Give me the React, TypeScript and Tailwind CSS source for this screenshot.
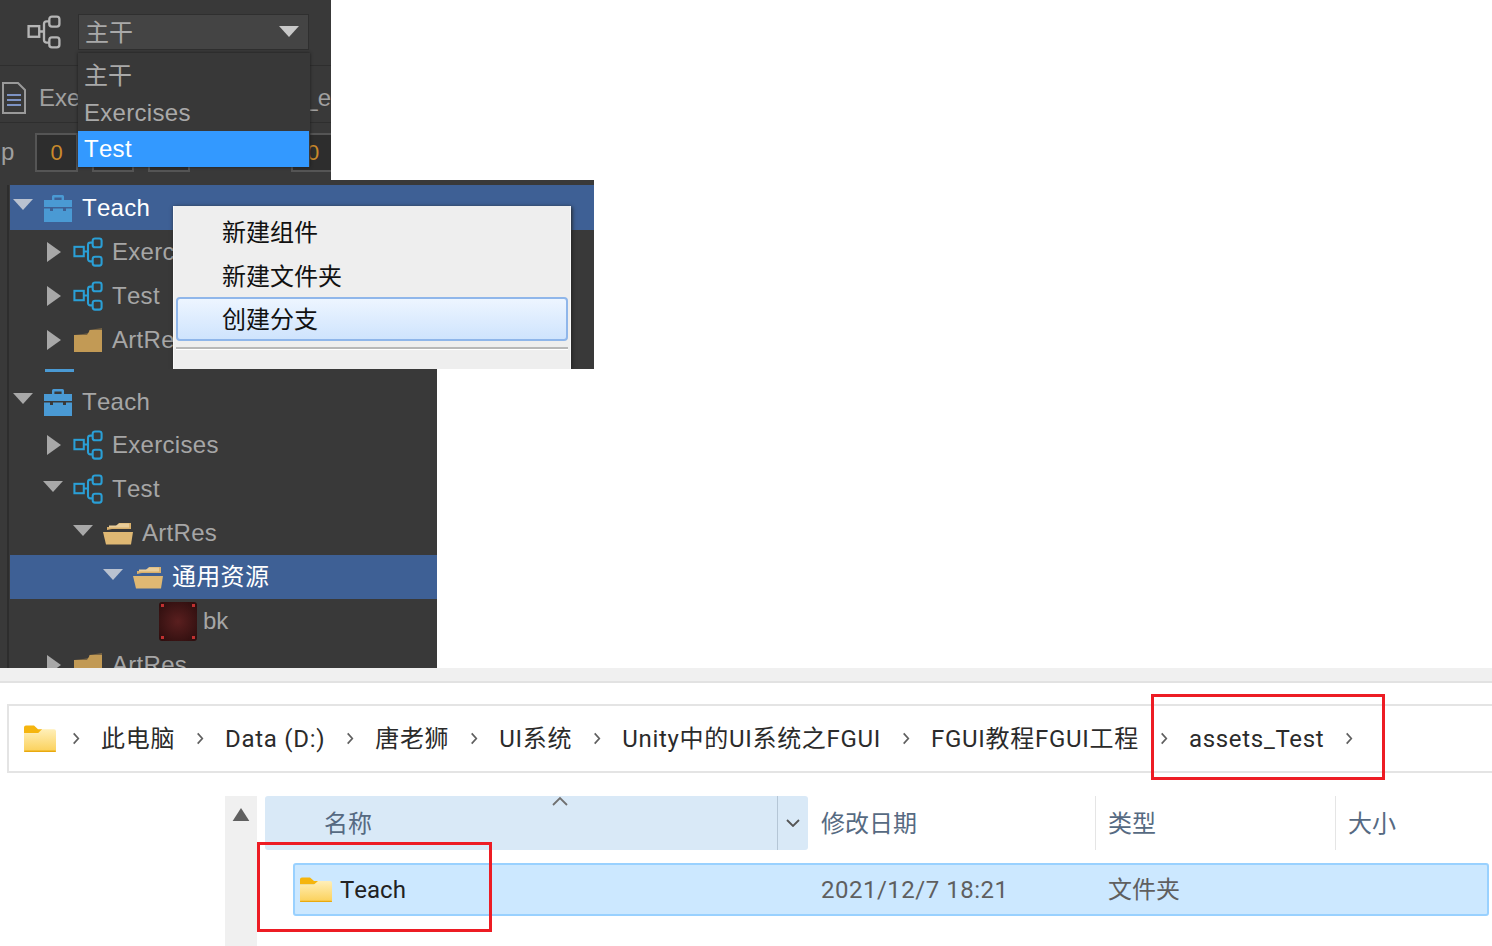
import React from 'react';

const font = "font-['Roboto','Noto_Sans_CJK_SC',sans-serif]";
const fguiFont = "font-['Liberation_Sans','Noto_Sans_CJK_SC',sans-serif] [font-kerning:none]";

function BranchIcon({ color = '#2a9fd6', className = 'w-[32px] h-[32px]' }: { color?: string; className?: string }) {
    return (
        <svg viewBox="0 0 32 32" fill="none" stroke={color} strokeWidth="2.2" className={className}>
            <rect x="1.5" y="10.5" width="10" height="10" />
            <rect x="21" y="1.5" width="9.5" height="9.5" rx="2.5" />
            <rect x="21" y="21" width="9.5" height="9.5" rx="2.5" />
            <path d="M11.5 15.5H16M21 6h-2.5a2.5 2.5 0 0 0-2.5 2.5v15a2.5 2.5 0 0 0 2.5 2.5H21" />
        </svg>
    );
}

function ToolboxIcon() {
    return (
        <svg viewBox="0 0 30 30" className="w-[30px] h-[30px]">
            <path d="M9 7V3.5A1.5 1.5 0 0 1 10.5 2h9A1.5 1.5 0 0 1 21 3.5V7h-2.4V4.4h-7.2V7z" fill="#4a9ad4" />
            <path d="M1 7h28v7H1z" fill="#4a9ad4" />
            <path d="M1 15.5h6V18h3v-2.5h10V18h3v-2.5h6V29H1z" fill="#4a9ad4" />
        </svg>
    );
}

function FolderClosed() {
    return (
        <svg viewBox="0 0 30 26" className="w-[30px] h-[26px]">
            <path d="M1 8l9-1 6-1V3l13-2v24H1z" fill="#c0965077" />
            <path d="M1 8h13l3-5h12v22H1z" fill="#c29a55" />
        </svg>
    );
}

function FolderOpen() {
    return (
        <svg viewBox="0 0 30 24" className="w-[30px] h-[24px]">
            <path d="M4 9V6h9l3-4h12v6H9z" fill="#d9b06c" />
            <path d="M0 11h30l-2 12.5H3z" fill="#dfb873" />
            <path d="M6 4.5h7l3-2h10v4H6z" fill="#e9cd9a" />
        </svg>
    );
}

function Arrow({ open, color = '#a8a8a8' }: { open: boolean; color?: string }) {
    return open ? (
        <svg viewBox="0 0 20 12" className="w-[20px] h-[12px] -mt-[5px]">
            <path d="M0 0h20L10 11z" fill={color} />
        </svg>
    ) : (
        <svg viewBox="0 0 14 20" className="w-[14px] h-[20px] ml-[4px]">
            <path d="M0 0l14 10L0 20z" fill={color} />
        </svg>
    );
}

type RowProps = {
    indent: string;
    height?: string;
    open?: boolean;
    icon: React.ReactNode;
    label: string;
    selected?: boolean;
};

function TreeRow({ indent, height = 'h-[44px]', open, icon, label, selected }: RowProps) {
    return (
        <div className={`flex shrink-0 items-center ${height} ${indent} ${selected ? 'bg-[#3e6095] text-white' : 'text-[#a6a6a6]'}`}>
            <div className="flex w-[20px] shrink-0 items-center justify-start">
                {open === undefined ? null : <Arrow open={open} color={selected ? '#b9c2d0' : '#a8a8a8'} />}
            </div>
            <div className="ml-[10px] flex w-[30px] shrink-0 items-center justify-center">{icon}</div>
            <span className="ml-[9px] whitespace-nowrap text-[24px] leading-none tracking-[0.3px]">{label}</span>
        </div>
    );
}

function NumBox({ className, empty }: { className: string; empty?: boolean }) {
    return (
        <div className={`flex h-[39px] shrink-0 items-center justify-center border-2 border-[#555555] bg-[#2d2d2d] text-[22px] text-[#c98a2b] ${className}`}>
            {empty ? '' : '0'}
        </div>
    );
}

function Toolbar() {
    return (
        <div className="relative flex h-[180px] w-[331px] flex-col overflow-hidden bg-[#393939]">
            <div className="flex h-[66px] shrink-0 items-center border-b border-[#2e2e2e] pb-[2px] pl-[27px]">
                <BranchIcon color="#b5b5b5" className="h-[34px] w-[34px]" />
                <div className="ml-[17px] flex h-[36px] w-[231px] items-center justify-between border border-[#2f2f2f] bg-[#444444] pl-[6px] pr-[9px] text-[24px] text-[#a9a9a9]">
                    <span className="pt-[3px]">主干</span>
                    <svg viewBox="0 0 20 12" className="h-[12px] w-[20px]">
                        <path d="M0 0h20L10 11z" fill="#c8c8c8" />
                    </svg>
                </div>
            </div>
            <div className="flex h-[57px] shrink-0 items-center justify-between border-b border-[#2e2e2e] pl-[2px] pt-[7px] text-[24px] text-[#a0a0a0]">
                <div className="flex items-center">
                    <svg viewBox="0 0 24 32" fill="none" className="h-[32px] w-[24px]">
                        <path d="M1 1h15l7 7v23H1z" stroke="#9a9a9a" strokeWidth="2" />
                        <path d="M5 13h14M5 18h14M5 23h14" stroke="#7d93c4" strokeWidth="2" />
                    </svg>
                    <span className="ml-[13px]">Exe</span>
                </div>
                <span>_e</span>
            </div>
            <div className="flex h-[57px] shrink-0 items-center pb-[1px] pt-[2px] text-[24px] text-[#a0a0a0]">
                <span className="w-[35px] shrink-0 pl-[1px]">p</span>
                <NumBox className="w-[43px]" />
                <NumBox className="ml-[14px] w-[42px]" empty />
                <NumBox className="ml-[14px] w-[42px]" empty />
                <NumBox className="ml-[101px] w-[44px]" />
            </div>

            {/* branch dropdown */}
            <div className="absolute left-[78px] top-[53px] flex h-[114px] w-[232px] flex-col bg-[#383838] text-[24px] leading-none text-[#a9a9a9] shadow-[0_0_3px_#1c1c1c]">
                <div className="flex h-[41px] items-center pl-[6px] pt-[4px]">主干</div>
                <div className="flex h-[37px] items-center pl-[6px] tracking-[0.3px]">Exercises</div>
                <div className="flex h-[36px] w-[231px] items-center bg-[#3399ff] pl-[6px] tracking-[0.3px] text-white">Test</div>
            </div>
        </div>
    );
}

function ContextMenu() {
    return (
        <div className={`absolute left-[173px] top-[26px] h-[163px] w-[398px] border-l border-r border-[#f8f8f8] bg-[#eeeeee] px-[2px] pt-[4px] text-[24px] leading-none text-[#111111] shadow-[1px_1px_4px_#222222] ${font}`}>
            <div className="flex h-[44px] items-center pl-[46px] pt-[2px]">新建组件</div>
            <div className="flex h-[43px] items-center pl-[46px] pt-[2px]">新建文件夹</div>
            <div className="flex h-[44px] items-center rounded-[4px] border-2 border-[#8fb6ea] bg-gradient-to-b from-[#edf5ff] to-[#cfe4fd] pl-[44px] pt-[2px]">创建分支</div>
            <div className="mt-[6px] border-t-2 border-b border-t-[#b8b8b8] border-b-white" />
        </div>
    );
}

function TreeTop() {
    return (
        <div className={`relative h-[189px] w-[594px] overflow-hidden bg-[#393939] pt-[5px] ${fguiFont}`}>
            <div className="ml-[7px] h-full border-l-2 border-[#2d2d2d] pl-px">
                <TreeRow indent="pl-[3px]" height="h-[45px]" open icon={<ToolboxIcon />} label="Teach" selected />
                <TreeRow indent="pl-[33px]" open={false} icon={<BranchIcon />} label="Exercises" />
                <TreeRow indent="pl-[33px]" open={false} icon={<BranchIcon />} label="Test" />
                <TreeRow indent="pl-[33px]" open={false} icon={<FolderClosed />} label="ArtRes" />
            </div>
            <ContextMenu />
        </div>
    );
}

function TreeBottom() {
    return (
        <div className={`h-[299px] w-[437px] overflow-hidden bg-[#393939] ${fguiFont}`}>
            <div className="ml-[7px] h-full border-l-2 border-[#2d2d2d] pl-px">
                <div className="ml-[35px] h-[3px] w-[29px] bg-[#4a9ad4]" />
                <div className="h-[8px]" />
                <TreeRow indent="pl-[3px]" height="h-[43px]" open icon={<ToolboxIcon />} label="Teach" />
                <TreeRow indent="pl-[33px]" open={false} icon={<BranchIcon />} label="Exercises" />
                <TreeRow indent="pl-[33px]" open icon={<BranchIcon />} label="Test" />
                <TreeRow indent="pl-[63px]" open icon={<FolderOpen />} label="ArtRes" />
                <TreeRow indent="pl-[93px]" open icon={<FolderOpen />} label="通用资源" selected />
                <div className="flex h-[44px] items-center pl-[149px] text-[#a6a6a6]">
                    <div className="relative h-[39px] w-[38px] rounded-[3px] bg-[radial-gradient(circle,#5a1f1f,#2a0d0d)]">
                        <span className="absolute left-[2px] top-[2px] h-[3px] w-[3px] bg-[#c03030]" />
                        <span className="absolute right-[2px] top-[2px] h-[3px] w-[3px] bg-[#c03030]" />
                        <span className="absolute bottom-[2px] left-[2px] h-[3px] w-[3px] bg-[#c03030]" />
                        <span className="absolute bottom-[2px] right-[2px] h-[3px] w-[3px] bg-[#c03030]" />
                    </div>
                    <span className="ml-[6px] text-[24px] leading-none">bk</span>
                </div>
                <TreeRow indent="pl-[33px]" open={false} icon={<FolderClosed />} label="ArtRes" />
            </div>
        </div>
    );
}

function WinFolder({ id, className }: { id: string; className: string }) {
    return (
        <svg viewBox="0 0 32 28" preserveAspectRatio="none" className={className}>
            <defs>
                <linearGradient id={id} x1="0" y1="0" x2="0" y2="1">
                    <stop offset="0" stopColor="#ffefb8" />
                    <stop offset="1" stopColor="#fbd058" />
                </linearGradient>
            </defs>
            <path d="M0 2.5A2 2 0 0 1 2 .5h8l4 4h4v4H0z" fill="#f5b50e" />
            <path d="M0 8.5L14 8.5l4-4h12a2 2 0 0 1 2 2V26.5a1.5 1.5 0 0 1-1.5 1.5h-29A1.5 1.5 0 0 1 0 26.5z" fill={`url(#${id})`} />
            <rect x="0" y="26.5" width="32" height="1.5" rx="0.7" fill="#e9a90f" />
        </svg>
    );
}

function Crumb() {
    return (
        <svg viewBox="0 0 8 14" fill="none" stroke="#5f5f5f" strokeWidth="1.8" className="h-[13px] w-[8px] shrink-0">
            <path d="M1.5 1.5L6.5 7l-5 5.5" />
        </svg>
    );
}

const crumbs = ['此电脑', 'Data (D:)', '唐老狮', 'UI系统', 'Unity中的UI系统之FGUI', 'FGUI教程FGUI工程', 'assets_Test'];

function AddressBar() {
    return (
        <div className="ml-[7px] mt-[21px] flex h-[69px] items-center border-y-2 border-l-2 border-[#e4e4e4] pl-[15px] text-[24px] leading-none tracking-[0.7px] text-[#2b2b2b]">
            <WinFolder id="barFolder" className="h-[27px] w-[32px]" />
            <div className="ml-[16px] flex items-center gap-[21px]">
                <Crumb />
                {crumbs.map((c) => (
                    <React.Fragment key={c}>
                        <span className="whitespace-nowrap">{c}</span>
                        <Crumb />
                    </React.Fragment>
                ))}
            </div>
        </div>
    );
}

function FileList() {
    return (
        <div className="mt-[23px] flex flex-1 pl-[225px]">
            <div className="flex w-[32px] shrink-0 justify-center bg-[#f0f0f0] pt-[12px]">
                <svg viewBox="0 0 18 14" className="h-[13px] w-[18px]">
                    <path d="M9 0l9 14H0z" fill="#606060" />
                </svg>
            </div>
            <div className="ml-[8px] flex-1">
                <div className="flex h-[54px] text-[24px] leading-none text-[#566a82]">
                    <div className="relative flex w-[543px] rounded-[3px] bg-[#d9e9f7]">
                        <span className="ml-[59px] self-center pt-[2px]">名称</span>
                        <svg viewBox="0 0 18 10" fill="none" stroke="#707070" strokeWidth="1.8" className="absolute left-[286px] top-[0px] h-[10px] w-[18px]">
                            <path d="M2 9l7-7 7 7" />
                        </svg>
                        <div className="ml-auto flex w-[31px] items-center justify-center border-l border-[#b5c6d6]">
                            <svg viewBox="0 0 14 8" fill="none" stroke="#555555" strokeWidth="1.8" className="h-[8px] w-[14px]">
                                <path d="M1 1l6 6 6-6" />
                            </svg>
                        </div>
                    </div>
                    <div className="flex w-[288px] items-center border-r border-[#e5e5e5] pl-[13px] pt-[2px]">修改日期</div>
                    <div className="flex w-[240px] items-center border-r border-[#e5e5e5] pl-[12px] pt-[2px]">类型</div>
                    <div className="flex items-center pl-[12px] pt-[2px]">大小</div>
                </div>
                <div className="ml-[28px] mr-[3px] mt-[13px] flex h-[53px] items-center rounded-[3px] border-2 border-[#99d1ff] bg-[#cce8ff] text-[24px] leading-none">
                    <div className="ml-[5px] -mt-[1px]">
                        <WinFolder id="rowFolder" className="h-[25px] w-[32px]" />
                    </div>
                    <span className="ml-[8px] w-[481px] text-[#222222] [font-kerning:none]">Teach</span>
                    <span className="w-[287px] tracking-[0.5px] text-[#5f5f5f]">2021/12/7 18:21</span>
                    <span className="text-[#5f5f5f]">文件夹</span>
                </div>
            </div>
        </div>
    );
}

export default function App() {
    return (
        <div className={`relative flex h-[946px] w-[1492px] flex-col overflow-hidden bg-white ${font}`}>
            <div className={`flex h-[668px] shrink-0 flex-col ${fguiFont}`}>
                <Toolbar />
                <TreeTop />
                <TreeBottom />
            </div>
            <div className="flex flex-1 flex-col">
                <div className="h-[15px] shrink-0 border-b-2 border-[#e2e2e2] bg-[#f0f0f0]" />
                <AddressBar />
                <FileList />
            </div>

            {/* red annotation boxes */}
            <div className="absolute left-[1151px] top-[694px] h-[86px] w-[234px] border-[3px] border-[#ed1c24]" />
            <div className="absolute left-[257px] top-[842px] h-[90px] w-[235px] border-[3px] border-[#ed1c24]" />
        </div>
    );
}
